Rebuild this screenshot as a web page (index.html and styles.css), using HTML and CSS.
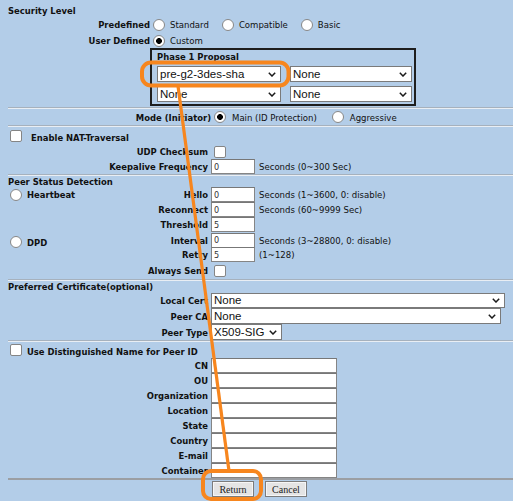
FILE: index.html
```html
<!DOCTYPE html>
<html>
<head>
<meta charset="utf-8">
<link rel="stylesheet" href="styles.css">
</head>
<body>
<div class="page">
  <div class="sec-title b">Security Level</div>
  <div class="lvl-row">
    <span class="lvl-label b">Predefined</span>
    <label class="opt"><input type="radio" name="lvl" class="radio"><span>Standard</span></label>
    <label class="opt"><input type="radio" name="lvl" class="radio"><span>Compatible</span></label>
    <label class="opt"><input type="radio" name="lvl" class="radio"><span>Basic</span></label>
  </div>
  <div class="lvl-row lvl-user">
    <span class="lvl-label b">User Defined</span>
    <label class="opt"><input type="radio" name="lvl" class="radio" checked><span>Custom</span></label>
  </div>
  <div class="proposal">
    <div class="proposal-title b">Phase 1 Proposal</div>
    <div class="proposal-row">
      <span class="sel sel-p1"><select><option>pre-g2-3des-sha</option></select><svg class="chev" width="8" height="5" viewBox="0 0 8 5"><path d="M0.8 0.8 L4 4 L7.2 0.8" fill="none" stroke="#1b1b1b" stroke-width="1.5"/></svg></span>
      <span class="sel sel-p2"><select><option>None</option></select><svg class="chev" width="8" height="5" viewBox="0 0 8 5"><path d="M0.8 0.8 L4 4 L7.2 0.8" fill="none" stroke="#1b1b1b" stroke-width="1.5"/></svg></span>
    </div>
    <div class="proposal-row proposal-row2">
      <span class="sel sel-p1"><select><option>None</option></select><svg class="chev" width="8" height="5" viewBox="0 0 8 5"><path d="M0.8 0.8 L4 4 L7.2 0.8" fill="none" stroke="#1b1b1b" stroke-width="1.5"/></svg></span>
      <span class="sel sel-p2"><select><option>None</option></select><svg class="chev" width="8" height="5" viewBox="0 0 8 5"><path d="M0.8 0.8 L4 4 L7.2 0.8" fill="none" stroke="#1b1b1b" stroke-width="1.5"/></svg></span>
    </div>
  </div>
  <div class="rule rule-a"></div>
  <div class="mode-row">
    <span class="mode-label b">Mode (Initiator)</span>
    <label class="opt opt-main"><input type="radio" name="mode" class="radio" checked><span>Main (ID Protection)</span></label>
    <label class="opt"><input type="radio" name="mode" class="radio"><span>Aggressive</span></label>
  </div>
  <div class="rule"></div>
  <div class="chk-row nat-row">
    <input type="checkbox" class="check">
    <span class="b chk-text">Enable NAT-Traversal</span>
  </div>
  <div class="frow">
    <span class="flabel b">UDP Checksum</span>
    <span class="fval"><input type="checkbox" class="check"></span>
  </div>
  <div class="frow">
    <span class="flabel b">Keepalive Frequency</span>
    <span class="fval"><input type="text" class="txt txt-s" value="0"><span>Seconds (0~300 Sec)</span></span>
  </div>
  <div class="rule"></div>
  <div class="grp-title b">Peer Status Detection</div>
  <div class="frow">
    <span class="flabel"><span class="side"><input type="radio" name="psd" class="radio"><span class="b">Heartbeat</span></span><span class="b">Hello</span></span>
    <span class="fval"><input type="text" class="txt txt-s" value="0"><span>Seconds (1~3600, 0: disable)</span></span>
  </div>
  <div class="frow">
    <span class="flabel b">Reconnect</span>
    <span class="fval"><input type="text" class="txt txt-s" value="0"><span>Seconds (60~9999 Sec)</span></span>
  </div>
  <div class="frow">
    <span class="flabel b">Threshold</span>
    <span class="fval"><input type="text" class="txt txt-s" value="5"></span>
  </div>
  <div class="frow">
    <span class="flabel"><span class="side side-dpd"><input type="radio" name="psd" class="radio"><span class="b">DPD</span></span><span class="b">Interval</span></span>
    <span class="fval"><input type="text" class="txt txt-s" value="0"><span>Seconds (3~28800, 0: disable)</span></span>
  </div>
  <div class="frow">
    <span class="flabel b">Retry</span>
    <span class="fval"><input type="text" class="txt txt-s" value="5"><span>(1~128)</span></span>
  </div>
  <div class="frow frow-always">
    <span class="flabel b">Always Send</span>
    <span class="fval"><input type="checkbox" class="check"></span>
  </div>
  <div class="rule"></div>
  <div class="grp-title b">Preferred Certificate(optional)</div>
  <div class="frow frow-sel">
    <span class="flabel b">Local Cert</span>
    <span class="fval"><span class="sel sel-local"><select><option>None</option></select><svg class="chev" width="8" height="5" viewBox="0 0 8 5"><path d="M0.8 0.8 L4 4 L7.2 0.8" fill="none" stroke="#1b1b1b" stroke-width="1.5"/></svg></span></span>
  </div>
  <div class="frow frow-sel">
    <span class="flabel b">Peer CA</span>
    <span class="fval"><span class="sel sel-ca"><select><option>None</option></select><svg class="chev" width="8" height="5" viewBox="0 0 8 5"><path d="M0.8 0.8 L4 4 L7.2 0.8" fill="none" stroke="#1b1b1b" stroke-width="1.5"/></svg></span></span>
  </div>
  <div class="frow frow-sel">
    <span class="flabel b">Peer Type</span>
    <span class="fval"><span class="sel sel-type"><select><option>X509-SIG</option></select><svg class="chev" width="8" height="5" viewBox="0 0 8 5"><path d="M0.8 0.8 L4 4 L7.2 0.8" fill="none" stroke="#1b1b1b" stroke-width="1.5"/></svg></span></span>
  </div>
  <div class="rule"></div>
  <div class="chk-row dn-row">
    <input type="checkbox" class="check">
    <span class="b chk-text">Use Distinguished Name for Peer ID</span>
  </div>
  <div class="frow"><span class="flabel b">CN</span><span class="fval"><input type="text" class="txt txt-l"></span></div>
  <div class="frow"><span class="flabel b">OU</span><span class="fval"><input type="text" class="txt txt-l"></span></div>
  <div class="frow"><span class="flabel b">Organization</span><span class="fval"><input type="text" class="txt txt-l"></span></div>
  <div class="frow"><span class="flabel b">Location</span><span class="fval"><input type="text" class="txt txt-l"></span></div>
  <div class="frow"><span class="flabel b">State</span><span class="fval"><input type="text" class="txt txt-l"></span></div>
  <div class="frow"><span class="flabel b">Country</span><span class="fval"><input type="text" class="txt txt-l"></span></div>
  <div class="frow"><span class="flabel b">E-mail</span><span class="fval"><input type="text" class="txt txt-l"></span></div>
  <div class="frow"><span class="flabel b">Container</span><span class="fval"><input type="text" class="txt txt-l"></span></div>
  <div class="rule-dark"></div>
  <div class="btn-row">
    <button class="btn btn-return">Return</button>
    <button class="btn btn-cancel">Cancel</button>
  </div>
</div>
<svg class="annot" width="513" height="501" viewBox="0 0 513 501">
  <rect x="142" y="62.5" width="146.5" height="23" rx="9" fill="none" stroke="#f7861e" stroke-width="4"/>
  <line x1="178" y1="86" x2="229" y2="471" stroke="#f7861e" stroke-width="3.2" stroke-linecap="round"/>
  <rect x="203" y="471" width="58" height="28" rx="8" fill="none" stroke="#f7861e" stroke-width="4"/>
</svg>
</body>
</html>
```

FILE: styles.css
```css
* { box-sizing: border-box; }
html, body { margin: 0; padding: 0; }
body {
  width: 513px;
  height: 501px;
  overflow: hidden;
  position: relative;
  background: #b3cde8;
  color: #111;
  font-family: "DejaVu Sans Condensed", "DejaVu Sans", sans-serif;
  font-size: 9.5px;
}
.page { padding-left: 8px; }
.b { font-weight: bold; font-size: 9.4px; }

.sec-title { margin-top: 4px; height: 13px; line-height: 13px; }

.lvl-row { display: flex; align-items: center; height: 15px; }
.lvl-user { margin-top: 1px; }
.lvl-label { width: 142px; text-align: right; }

.opt { display: flex; align-items: center; margin-right: 10px; }
.opt .radio { margin: 0 5px 0 3px; }

.radio {
  appearance: none;
  -webkit-appearance: none;
  width: 12px;
  height: 12px;
  margin: 0;
  flex: none;
  border: 1px solid #878787;
  border-radius: 50%;
  background: #fff;
}
.radio:checked { background: radial-gradient(circle, #000 0 2.6px, #fff 3.2px); }

.check {
  appearance: none;
  -webkit-appearance: none;
  width: 12px;
  height: 12px;
  margin: 0;
  flex: none;
  border: 1px solid #858585;
  border-radius: 2px;
  background: #fff;
}

.proposal {
  margin-left: 142px;
  width: 266px;
  height: 58px;
  border: 2px solid #1e1e1e;
  padding: 0 1px 2px 5px;
}
.proposal-title { height: 14px; line-height: 14px; }
.proposal-row { display: flex; gap: 9px; margin-top: 2px; height: 16px; }
.proposal-row2 { margin-top: 4px; }

.sel { position: relative; display: inline-block; height: 16px; flex: none; }
.sel select {
  appearance: none;
  -webkit-appearance: none;
  display: block;
  width: 100%;
  height: 100%;
  margin: 0;
  border: 1px solid #7a7a7a;
  border-radius: 0;
  background: #fff;
  color: #111;
  font-family: "Liberation Sans", Arial, sans-serif;
  font-size: 11.5px;
  padding: 0 14px 0 2px;
}
.chev { position: absolute; right: 5px; top: 50%; margin-top: -2.5px; }
.sel-p1 { width: 124px; }
.sel-p2 { width: 122px; }
.sel-local { width: 294px; height: 15px; }
.sel-ca { width: 290px; }
.sel-type { width: 71px; }

.rule {
  height: 2px;
  border-top: 1px solid #a6b1bd;
  border-bottom: 1px solid #e9eef4;
}
.rule-a { margin-top: 1px; }
.rule-dark { height: 2px; background: #9b9ea3; }

.mode-row { display: flex; align-items: center; height: 16px; }
.mode-label { width: 203px; text-align: right; }
.mode-row .radio { margin: 0 6px 0 3px; }
.opt-main { margin-right: 12px; }
.mode-row .opt .radio { margin: 0 6px 0 3px; }

.chk-row { display: flex; align-items: center; height: 17px; }
.chk-row .check { margin-left: 2px; }
.nat-row .chk-text { margin-left: 9px; padding-top: 3px; }
.dn-row { height: 16px; }
.dn-row .chk-text { margin-left: 5px; padding-top: 3px; }

.frow {
  display: grid;
  grid-template-columns: 200px auto;
  column-gap: 3px;
  align-items: center;
  height: 15px;
}
.frow-always { height: 17px; }
.frow-sel { height: 16px; }
.flabel { display: flex; align-items: center; justify-content: flex-end; white-space: nowrap; }
.side { display: flex; align-items: center; margin-right: auto; }
.side .radio { margin: 0 5px 0 2px; }
.side-dpd { margin-top: 4px; }
.fval { display: flex; align-items: center; gap: 4px; white-space: nowrap; }
.fval > .check { margin-left: 3px; }

.txt {
  height: 15px;
  margin: 0;
  border: 1px solid #858585;
  border-top-color: #777;
  background: #fff;
  padding: 0 2px;
  font-family: "DejaVu Sans Condensed", "DejaVu Sans", sans-serif;
  font-size: 9px;
  color: #333;
  outline: none;
}
.txt-s { width: 44px; }
.txt-l { width: 126px; }

.grp-title { height: 11px; line-height: 11px; }

.btn-row { display: flex; gap: 11px; padding-left: 204px; padding-top: 1px; }
.btn {
  height: 16px;
  margin: 0;
  padding: 0;
  border: 1px solid #7c7c7c;
  box-shadow: inset 0 0 0 1px #f6f6f6;
  background: #e4e4e4;
  color: #222;
  font-family: "Liberation Serif", "Times New Roman", serif;
  font-size: 10px;
}
.btn-return { width: 42px; }
.btn-cancel { width: 42px; }

.annot { position: absolute; left: 0; top: 0; pointer-events: none; }
```
